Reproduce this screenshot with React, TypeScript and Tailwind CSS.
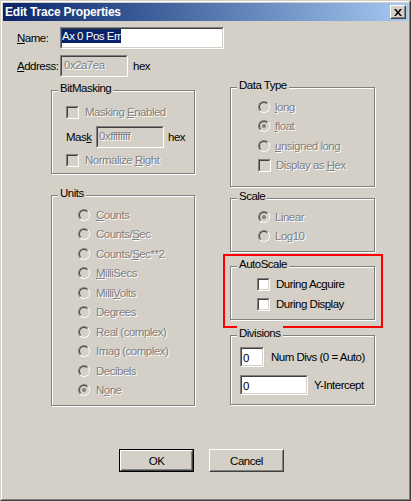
import React from "react";

const DIS = "text-[#808080] [text-shadow:1px_1px_0_#ffffff]";

type U = [string, string, string];

function Label({ t }: { t: U }) {
  return (
    <span className="whitespace-pre">
      {t[0]}
      {t[1] && <span className="underline">{t[1]}</span>}
      {t[2]}
    </span>
  );
}

function Sunken({ className, inner, children }: { className: string; inner: string; children?: React.ReactNode }) {
  return (
    <div className={"border border-t-[#808080] border-l-[#808080] border-r-white border-b-white shrink-0 " + className}>
      <div className={"h-full w-full border border-t-[#404040] border-l-[#404040] border-r-[#d4d0c8] border-b-[#d4d0c8] flex items-start overflow-hidden whitespace-pre " + inner}>
        {children}
      </div>
    </div>
  );
}

function Radio({ checked }: { checked?: boolean }) {
  return (
    <div className="w-[12px] h-[12px] rounded-full border border-t-[#808080] border-l-[#808080] border-r-white border-b-white shrink-0">
      <div className="w-full h-full rounded-full border border-t-[#404040] border-l-[#404040] border-r-[#d4d0c8] border-b-[#d4d0c8] bg-[#d4d0c8] flex items-center justify-center">
        {checked && <div className="w-[4px] h-[4px] rounded-full bg-[#808080]" />}
      </div>
    </div>
  );
}

function Check({ enabled }: { enabled?: boolean }) {
  return (
    <div className="w-[13px] h-[13px] border border-t-[#808080] border-l-[#808080] border-r-white border-b-white shrink-0">
      <div
        className={
          "w-full h-full border border-t-[#404040] border-l-[#404040] border-r-[#d4d0c8] border-b-[#d4d0c8] " +
          (enabled ? "bg-white" : "bg-[#d4d0c8]")
        }
      />
    </div>
  );
}

function Group({ label, className, children }: { label: string; className: string; children?: React.ReactNode }) {
  return (
    <div className={"relative border border-[#808080] shadow-[inset_1px_1px_0_#ffffff,1px_1px_0_#ffffff] " + className}>
      <span className="absolute -top-[10px] left-[6px] bg-[#d4d0c8] px-[2px] leading-[14px] whitespace-pre">{label}</span>
      {children}
    </div>
  );
}

function RadioRow({ t, checked, gap }: { t: U; checked?: boolean; gap: string }) {
  return (
    <div className="h-[19.5px] flex items-center">
      <Radio checked={checked} />
      <span className={gap + " " + DIS}>
        <Label t={t} />
      </span>
    </div>
  );
}

function Button({ label, def }: { label: string; def?: boolean }) {
  if (def) {
    return (
      <div className="w-[75px] h-[23px] border border-black">
        <div className="w-full h-full border border-t-white border-l-white border-r-[#404040] border-b-[#404040]">
          <div className="w-full h-full border border-t-[#d4d0c8] border-l-[#d4d0c8] border-r-[#808080] border-b-[#808080] flex items-center justify-center">
            {label}
          </div>
        </div>
      </div>
    );
  }
  return (
    <div className="w-[75px] h-[23px] border border-t-white border-l-white border-r-[#404040] border-b-[#404040]">
      <div className="w-full h-full border border-t-[#d4d0c8] border-l-[#d4d0c8] border-r-[#808080] border-b-[#808080] flex items-center justify-center">
        {label}
      </div>
    </div>
  );
}

const UNITS: { t: U; c?: boolean }[] = [
  { t: ["", "C", "ounts"] },
  { t: ["Counts/", "S", "ec"] },
  { t: ["Counts/", "S", "ec**2"] },
  { t: ["", "M", "illiSecs"] },
  { t: ["Milli", "V", "olts"] },
  { t: ["Degrees", "", ""] },
  { t: ["Real (complex)", "", ""] },
  { t: ["Imag (complex)", "", ""] },
  { t: ["Decibels", "", ""] },
  { t: ["N", "o", "ne"], c: true },
];

export default function App() {
  return (
    <div className="w-[411px] h-[501px] bg-[#d4d0c8] border border-t-[#d4d0c8] border-l-[#d4d0c8] border-r-[#404040] border-b-[#404040] font-['Liberation_Sans',Arial,sans-serif] text-[11.5px] tracking-[-0.5px] leading-[14px] text-black overflow-hidden">
      <div className="h-full border border-t-white border-l-white border-r-[#808080] border-b-[#808080] p-[1px] flex flex-col">
        {/* Title bar */}
        <div className="h-[18px] shrink-0 bg-linear-to-r from-[#0a246a] to-[#a6caf0] flex items-center justify-between pl-[2px] pr-[2px]">
          <span className="text-white font-bold text-[12px] tracking-[-0.2px]">Edit Trace Properties</span>
          <div className="w-[16px] h-[14px] border border-t-white border-l-white border-r-[#404040] border-b-[#404040] bg-[#d4d0c8]">
            <div className="w-full h-full border border-t-[#d4d0c8] border-l-[#d4d0c8] border-r-[#808080] border-b-[#808080] flex items-center justify-center">
              <svg width="8" height="7" viewBox="0 0 8 7">
                <path d="M0 0h2l2 2.5 2-2.5h2l-3 3.5 3 3.5h-2l-2-2.5-2 2.5h-2l3-3.5z" fill="#000" />
              </svg>
            </div>
          </div>
        </div>

        {/* Content */}
        <div className="flex flex-col pl-[14px]">
          <div className="mt-[6px] h-[22px] flex items-center">
            <span className="w-[43px] shrink-0">
              <Label t={["", "N", "ame:"]} />
            </span>
            <Sunken className="w-[164px] h-[22px] bg-white" inner="pt-0">
              <span className="bg-[#0a246a] text-white leading-[14px]">Ax 0 Pos Err</span>
            </Sunken>
          </div>

          <div className="mt-[6px] h-[22px] flex items-center">
            <span className="w-[43px] shrink-0">
              <Label t={["", "A", "ddress:"]} />
            </span>
            <Sunken className="w-[68px] h-[22px] bg-[#d4d0c8]" inner="pt-[1px] pl-[2px]">
              <span className={DIS}>0x2a7ea</span>
            </Sunken>
            <span className="ml-[5px]">hex</span>
          </div>

          {/* Columns */}
          <div className="flex items-start">
            {/* Left column */}
            <div className="ml-[34px] mt-[13px] w-[144px] flex flex-col">
              <Group label="BitMasking" className="h-[84px] flex flex-col pl-[14px] pt-[11px]">
                <div className="h-[20px] flex items-center">
                  <Check />
                  <span className={"ml-[6px] " + DIS}>
                    <Label t={["Masking ", "E", "nabled"]} />
                  </span>
                </div>
                <div className="mt-[4px] h-[22px] flex items-center">
                  <span className="w-[30px] shrink-0">
                    <Label t={["Mas", "k", ""]} />
                  </span>
                  <Sunken className="w-[68px] h-[22px] bg-[#d4d0c8]" inner="pt-[1px] pl-[1px]">
                    <span className={DIS}>0xffffffff</span>
                  </Sunken>
                  <span className="ml-[4px]">hex</span>
                </div>
                <div className="mt-[2px] h-[20px] flex items-center">
                  <Check />
                  <span className={"ml-[6px] " + DIS}>
                    <Label t={["Normalize ", "R", "ight"]} />
                  </span>
                </div>
              </Group>

              <Group label="Units" className="mt-[21px] h-[211px] flex flex-col pl-[26px] pt-[9px]">
                {UNITS.map((u, i) => (
                  <RadioRow key={i} t={u.t} checked={u.c} gap="ml-[6px]" />
                ))}
              </Group>
            </div>

            {/* Right column */}
            <div className="ml-[35px] mt-[10px] w-[145px] flex flex-col">
              <Group label="Data Type" className="h-[100px] flex flex-col pl-[27px] pt-[9px]">
                <RadioRow t={["", "l", "ong"]} gap="ml-[5px]" />
                <RadioRow t={["", "f", "loat"]} checked gap="ml-[5px]" />
                <RadioRow t={["", "u", "nsigned long"]} gap="ml-[5px]" />
                <div className="h-[19.5px] flex items-center">
                  <Check />
                  <span className={"ml-[5px] " + DIS}>
                    <Label t={["Display as ", "H", "ex"]} />
                  </span>
                </div>
              </Group>

              <Group label="Scale" className="mt-[11px] h-[54px] flex flex-col pl-[27px] pt-[8px]">
                <RadioRow t={["Linear", "", ""]} checked gap="ml-[5px]" />
                <RadioRow t={["Log10", "", ""]} gap="ml-[5px]" />
              </Group>

              <div className="mt-[2px] -ml-[7px] w-[160px] h-[74px] border-2 border-[#ff0000] pl-[5px] pt-[10px]">
                <Group label="AutoScale" className="w-[145px] h-[54px] flex flex-col pl-[26px] pt-[7px]">
                  <div className="h-[20px] flex items-center">
                    <Check enabled />
                    <span className="ml-[6px]">
                      <Label t={["During Ac", "q", "uire"]} />
                    </span>
                  </div>
                  <div className="h-[20px] flex items-center">
                    <Check enabled />
                    <span className="ml-[6px]">
                      <Label t={["During Dis", "p", "lay"]} />
                    </span>
                  </div>
                </Group>
              </div>

              <Group label="Divisions" className="mt-[7px] h-[70px] flex flex-col pl-[9px] pt-[11px]">
                <div className="h-[20px] flex items-center">
                  <Sunken className="w-[24px] h-[20px] bg-white" inner="pt-[2px] pl-[1px]">
                    <span>0</span>
                  </Sunken>
                  <span className="ml-[7px] whitespace-pre">Num Divs (0 = Auto)</span>
                </div>
                <div className="mt-[8px] h-[20px] flex items-center">
                  <Sunken className="w-[68px] h-[20px] bg-white" inner="pt-[2px] pl-[1px]">
                    <span>0</span>
                  </Sunken>
                  <span className="ml-[6px] whitespace-pre">Y-Intercept</span>
                </div>
              </Group>
            </div>
          </div>

          {/* Buttons */}
          <div className="mt-[43px] ml-[102px] flex gap-[15px]">
            <Button label="OK" def />
            <Button label="Cancel" />
          </div>
        </div>
      </div>
    </div>
  );
}
